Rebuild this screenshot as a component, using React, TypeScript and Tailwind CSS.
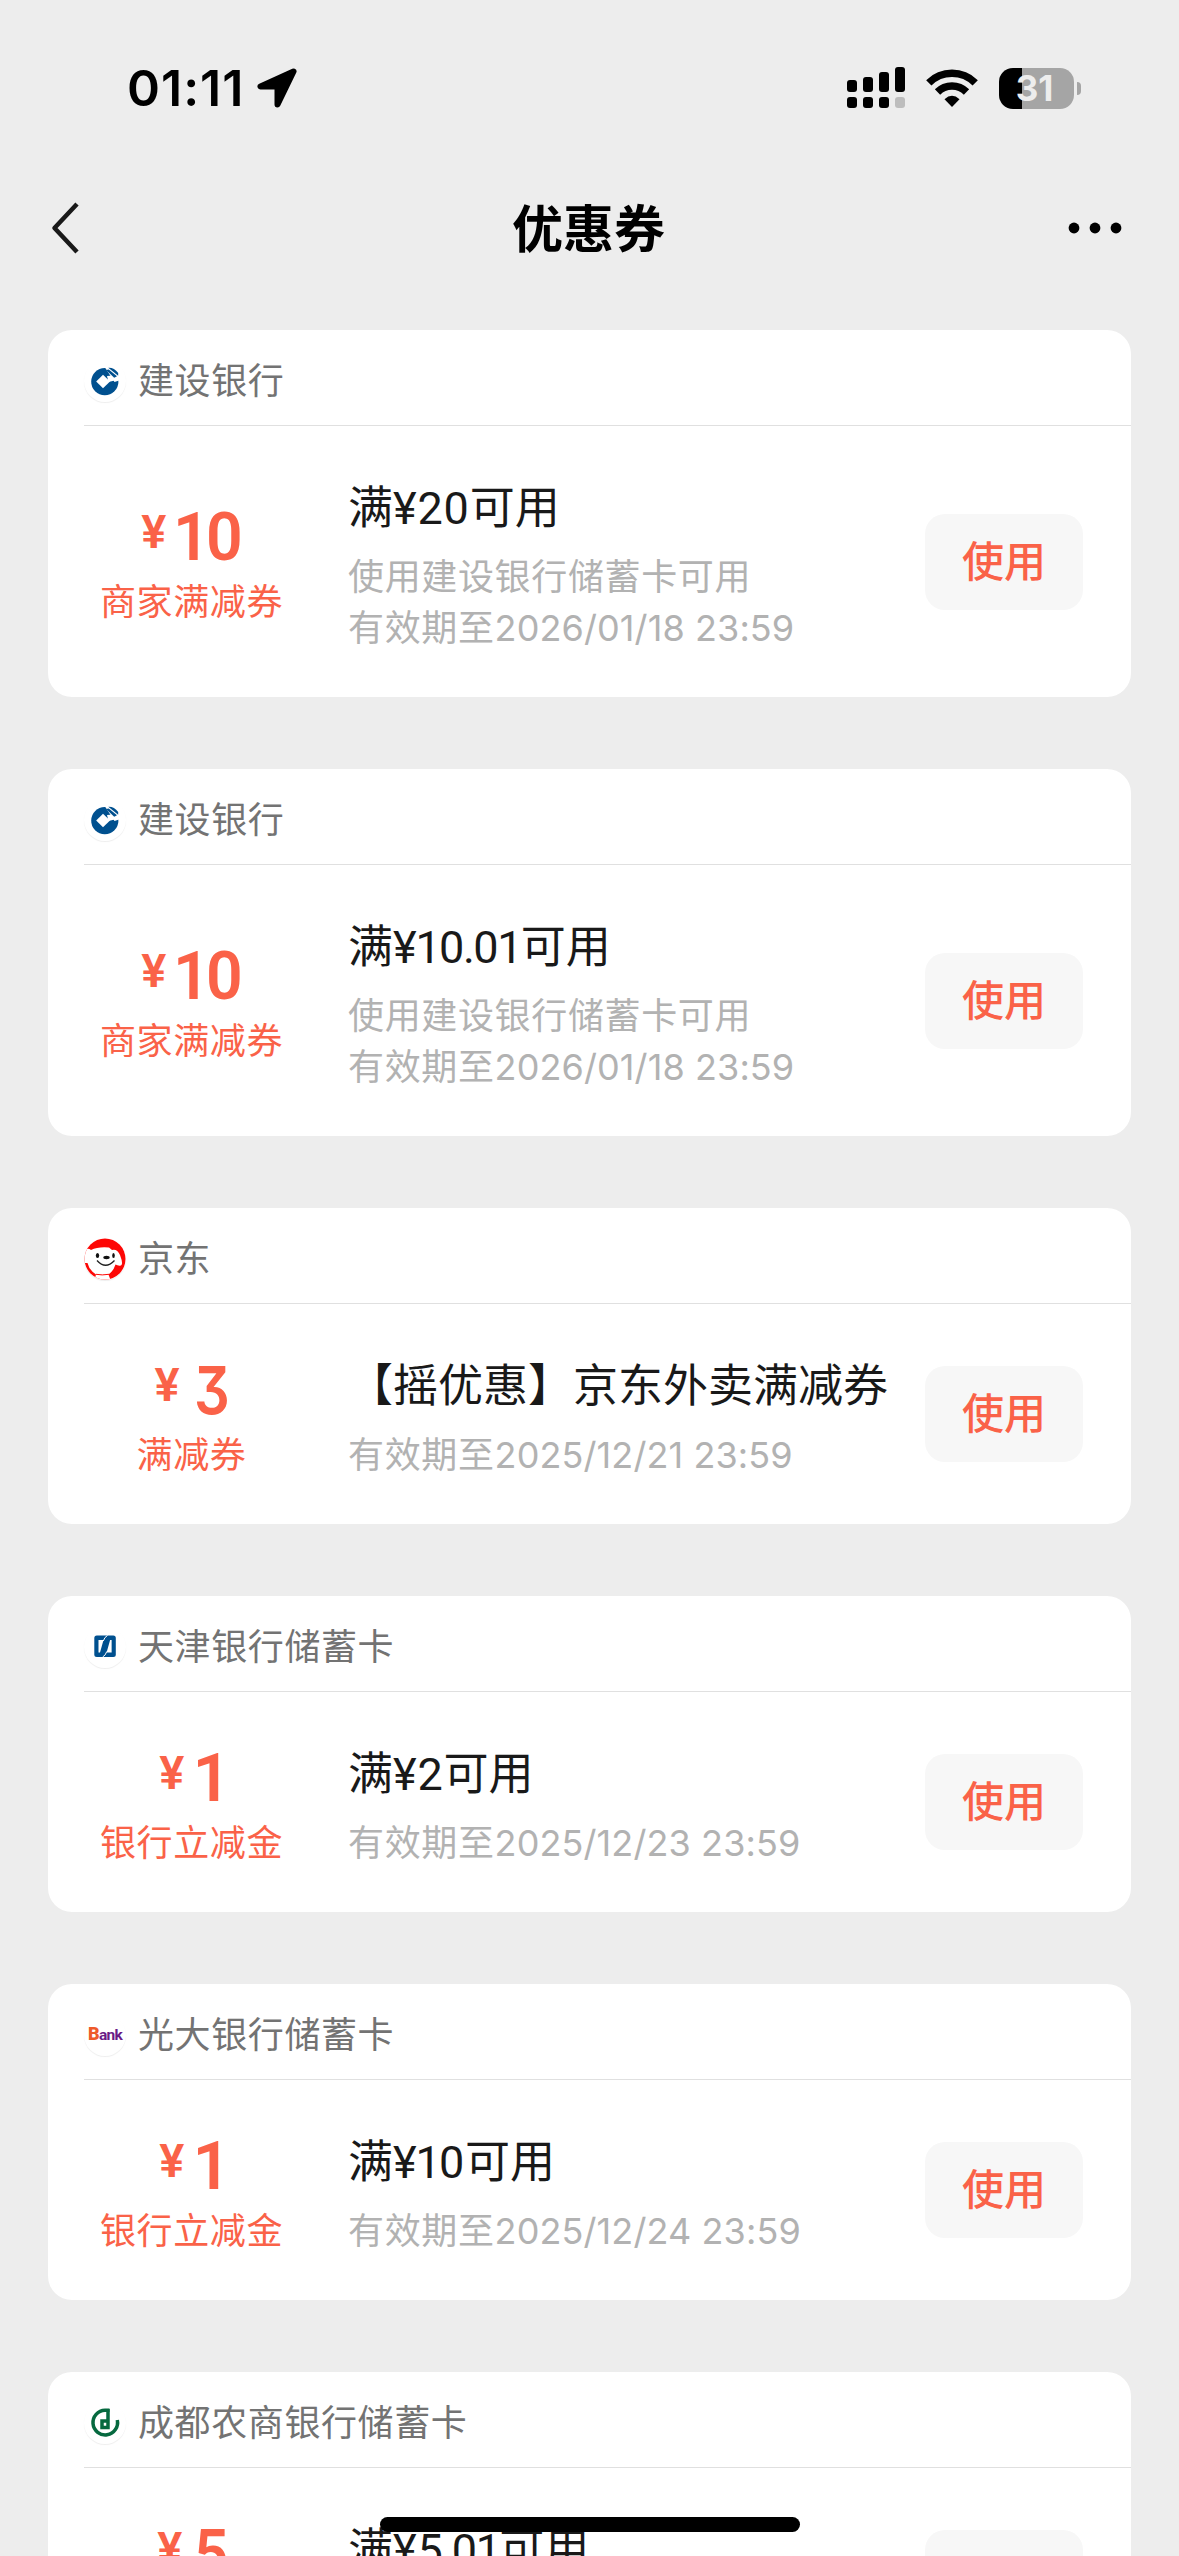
import type { ReactNode } from "react";

const CcbLogo = () => (
  <svg viewBox="0 0 50 50" className="h-[50px] w-[50px]">
    <circle cx="24.800" cy="25.700" r="13.600" fill="#00508f" />
    <path d="M24 10L34.500 26L42 23.500V8Z" fill="#fff" />
    <path d="M23 18.700L30 25.500L23 32.300L16.200 25.500Z" fill="#fff" />
    <path d="M28.500 26L39 23.500V19L27 20Z" fill="#fff" />
    <path d="M26 14L28.800 13.500L37 20.300L34.200 21.800Z" fill="#00508f" />
    <path d="M28.300 11.700Q34 11.300 38.200 17V19.800Z" fill="#00508f" />
  </svg>
);

const JdLogo = () => (
  <svg viewBox="0 0 42 42" className="h-[42px] w-[42px]">
    <defs>
      <clipPath id="jd-clip">
        <circle cx="21" cy="21" r="20.5" />
      </clipPath>
    </defs>
    <g clipPath="url(#jd-clip)">
      <rect width="42" height="42" fill="#fd0705" />
      <path
        d="M0 12.500Q4 9.500 7 12Q14 8.500 25 9.500L28 12Q33 10.500 36 17Q39.500 26 37 27.500Q34 28 31.500 26.500Q29.500 33 24.500 36.500L26.500 42H10.500L12 36.500Q5 32 3.500 25L0 25Z"
        fill="#fff"
      />
      <path d="M12 36.300Q18 37.500 25 36.300" stroke="#fd0705" strokeWidth="1" fill="none" />
      <ellipse cx="13.500" cy="17.500" rx="1.700" ry="2.600" fill="#111" />
      <ellipse cx="29.500" cy="17.500" rx="1.300" ry="2.600" fill="#111" />
      <ellipse cx="22.500" cy="19.500" rx="3.200" ry="1.700" fill="#111" />
      <path d="M13 22.500Q21.500 32 30.500 22.500" stroke="#222" strokeWidth="1.300" fill="none" />
    </g>
  </svg>
);

const TianjinLogo = () => (
  <svg viewBox="0 0 50 50" className="h-[50px] w-[50px]">
    <rect x="14.300" y="13.500" width="21.500" height="21.500" rx="2.500" fill="#00508f" />
    <path d="M18.500 18H23.500L20 30.500H18.500Z" fill="#fff" />
    <path d="M31.600 30.500H26.600L30.100 18H31.600Z" fill="#fff" />
    <path d="M27.500 13.500Q24.500 15 23.300 19M22.600 35Q25.600 33.500 26.800 29.500" stroke="#fff" strokeWidth="1" fill="none" />
  </svg>
);

const EverbrightLogo = () => (
  <span className="flex h-[42px] w-[42px] items-baseline justify-center pt-[10px] font-[Roboto,sans-serif] text-[15.500px] font-bold leading-[20px] tracking-[-0.700px] text-[#6a1b86]">
    <span className="text-[18px] font-black text-[#ee5a2a]">B</span>ank
  </span>
);

const ChengduLogo = () => (
  <svg viewBox="0 0 50 50" className="h-[50px] w-[50px]" fill="none" stroke="#06693f" strokeWidth="3.500">
    <path d="M29.500 12.300H25A12.300 12.300 0 1 0 37.300 22" />
    <path d="M28 11V29.500H22V23H28" />
  </svg>
);

type Coupon = {
  logo: ReactNode;
  issuer: string;
  amount: string;
  kind: string;
  title: string;
  note?: string;
  expiry: string;
};

const coupons: Coupon[] = [
  { logo: <CcbLogo />, issuer: "建设银行", amount: "10", kind: "商家满减券", title: "满¥20可用", note: "使用建设银行储蓄卡可用", expiry: "2026/01/18 23:59" },
  { logo: <CcbLogo />, issuer: "建设银行", amount: "10", kind: "商家满减券", title: "满¥10.01可用", note: "使用建设银行储蓄卡可用", expiry: "2026/01/18 23:59" },
  { logo: <JdLogo />, issuer: "京东", amount: "3", kind: "满减券", title: "【摇优惠】京东外卖满减券", expiry: "2025/12/21 23:59" },
  { logo: <TianjinLogo />, issuer: "天津银行储蓄卡", amount: "1", kind: "银行立减金", title: "满¥2可用", expiry: "2025/12/23 23:59" },
  { logo: <EverbrightLogo />, issuer: "光大银行储蓄卡", amount: "1", kind: "银行立减金", title: "满¥10可用", expiry: "2025/12/24 23:59" },
  { logo: <ChengduLogo />, issuer: "成都农商银行储蓄卡", amount: "5", kind: "银行立减金", title: "满¥5.01可用", expiry: "2025/12/31 23:59" },
];

const amountStyles: Record<string, string> = {
  "10": "ml-[7px] origin-left scale-x-[0.96] text-[67px] tracking-[-4px]",
  "1": "ml-2 text-[67px]",
  "3": "ml-[14px] origin-left scale-x-[0.85] font-[Inter,sans-serif] text-[66px] [font-feature-settings:'cv09']",
  "5": "ml-3 origin-left scale-x-[0.9] text-[67px]",
};

/* Sets the narrow glyphs "1" and "." tighter than the other figures. */
function CouponTitle({ text }: { text: string }) {
  return (
    <h2 className="font-[Roboto,'Noto_Sans_CJK_SC',sans-serif] text-[45px] leading-[72px] text-[#191919]">
      {text.split(/([¥\d.]+)/).map((run, i) =>
        i % 2 === 0 ? (
          run
        ) : (
          <span key={i} className="tracking-[0.800px]">
            {run.split(/([1.])/).map((part, j) =>
              j % 2 === 0 ? part : <span key={j} className="-ml-[2px] tracking-[-1.800px]">{part}</span>,
            )}
          </span>
        ),
      )}
    </h2>
  );
}

function CouponCard({ coupon }: { coupon: Coupon }) {
  return (
    <section className={`flex shrink-0 flex-col rounded-[24px] bg-white ${coupon.note ? "h-[367px]" : "h-[316px]"}`}>
      <header className="ml-9 flex h-24 shrink-0 items-center border-b border-[#e0e0e0] pt-[6px]">
        <span className="flex h-[42px] w-[42px] shrink-0 items-center justify-center rounded-full shadow-[0_1px_1px_rgba(0,0,0,0.07)]">
          <span className="-m-1 shrink-0">{coupon.logo}</span>
        </span>
        <span className="ml-3 pt-[2px] text-[36px] leading-[51px] tracking-[0.600px] text-[#737373]">{coupon.issuer}</span>
      </header>
      <div className="flex flex-1 items-center pl-9 pr-12">
        <div className="flex w-[215px] flex-col items-center pt-[4px] text-[#fa6248]">
          <div className={`flex h-[78px] items-start font-[Roboto,sans-serif] font-semibold ${coupon.amount.length > 1 ? "" : "pl-[7px]"}`}>
            <span className="pt-[6px] text-[47px] leading-[54px]">¥</span>
            <span className={`leading-[77px] ${amountStyles[coupon.amount]}`}>{coupon.amount}</span>
          </div>
          <div className="text-[36px] leading-[51px] tracking-[0.600px]">{coupon.kind}</div>
        </div>
        <div className="ml-[49px] flex flex-1 flex-col gap-[7px] whitespace-nowrap pt-[3px]">
          <CouponTitle text={coupon.title} />
          <div className="text-[36px] leading-[51px] tracking-[0.650px] text-[#b2b2b2]">
            {coupon.note && <p>{coupon.note}</p>}
            <p>
              有效期至<span className="tracking-[0.100px]">{coupon.expiry}</span>
            </p>
          </div>
        </div>
        <button className="h-24 w-[158px] shrink-0 rounded-[20px] bg-[#f7f7f7] text-[42px] font-medium leading-[60px] text-[#fa6248]">使用</button>
      </div>
    </section>
  );
}

function StatusBar() {
  return (
    <div className="flex h-[176px] shrink-0 items-center justify-between pl-[127px] pr-[98px]">
      <div className="flex items-center">
        <span className="text-[50px] font-semibold leading-[60px] tracking-[1px]">01:11</span>
        <svg viewBox="0 0 40 40" className="ml-[13px] h-10 w-10">
          <path d="M36.500 3.500L3.500 18.500H20.500V36.500Z" fill="#000" stroke="#000" strokeWidth="6" strokeLinejoin="round" />
        </svg>
      </div>
      <div className="flex items-center">
        <svg viewBox="0 0 58 42" className="h-[42px] w-[58px]">
          <rect x="0" y="13" width="10" height="12" rx="3" />
          <rect x="16" y="10" width="10" height="15" rx="3" />
          <rect x="32" y="5" width="10" height="20" rx="3" />
          <rect x="48" y="0" width="10" height="25" rx="3" />
          <rect x="0" y="30" width="10" height="11" rx="3" />
          <rect x="16" y="30" width="10" height="11" rx="3" />
          <rect x="32" y="30" width="10" height="11" rx="3" />
          <rect x="48" y="30" width="10" height="11" rx="3" fill="#bdbdbd" />
        </svg>
        <svg viewBox="0 0 52 38" className="ml-[21px] h-[38px] w-[52px]">
          <g fill="none" stroke="#000" strokeWidth="7.500">
            <path d="M2.800 13.800A33 33 0 0 1 49.200 13.800" />
            <path d="M11.500 23A20.500 20.500 0 0 1 40.500 23" />
          </g>
          <path d="M26 38L18.500 30.200Q26 23.500 33.500 30.200Z" />
        </svg>
        <div className="ml-[21px] flex h-[41px] w-[75px] items-center justify-center rounded-[14px] bg-[linear-gradient(90deg,#000_23px,#a5a5a5_23px)] text-[35px] font-bold leading-none text-[#ededed]">
          <span className="-ml-1">31</span>
        </div>
        <div className="ml-[3px] h-[13px] w-1 rounded-r-full bg-[#a5a5a5]" />
      </div>
    </div>
  );
}

export default function App() {
  return (
    <div className="relative flex h-[2556px] w-[1179px] flex-col overflow-hidden bg-[#ededed] font-[Inter,'Noto_Sans_CJK_SC',sans-serif] text-black">
      <StatusBar />
      <nav className="grid h-[104px] shrink-0 grid-cols-[1fr_auto_1fr] items-center px-[50px]">
        <svg viewBox="0 0 30 52" className="h-[52px] w-[30px]" fill="none" stroke="#191919" strokeWidth="4.500">
          <path d="M27 2L4.500 26L27 50" strokeLinejoin="round" />
        </svg>
        <h1 className="-ml-[2px] pt-[3px] text-[51px] font-semibold leading-[60px]">优惠券</h1>
        <svg viewBox="0 0 54 12" className="mr-[7px] h-3 w-[54px] justify-self-end">
          <circle cx="6" cy="6" r="5.400" />
          <circle cx="27" cy="6" r="5.400" />
          <circle cx="48" cy="6" r="5.400" />
        </svg>
      </nav>
      <main className="flex flex-col gap-[72px] px-12 pt-[50px]">
        {coupons.map((coupon, index) => (
          <CouponCard key={index} coupon={coupon} />
        ))}
      </main>
      <div className="absolute bottom-[24px] left-[380px] h-[15px] w-[420px] rounded-full bg-black" />
    </div>
  );
}
